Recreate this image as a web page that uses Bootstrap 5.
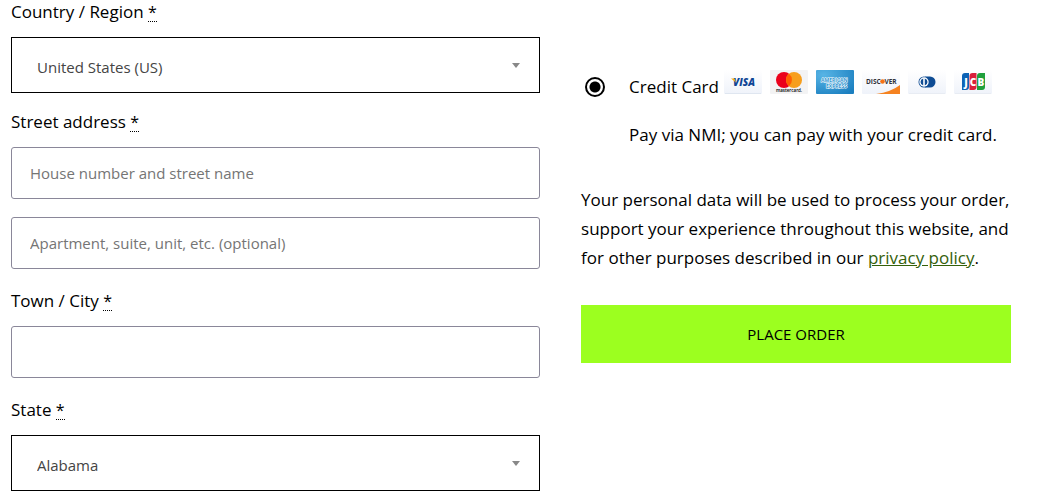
<!DOCTYPE html>
<html lang="en">
<head>
<meta charset="utf-8">
<meta name="viewport" content="width=device-width, initial-scale=1">
<title>Checkout</title>
<link href="https://cdn.jsdelivr.net/npm/bootstrap@5.3.0/dist/css/bootstrap.min.css" rel="stylesheet">
<style>
  body { font-family: "Open Sans", sans-serif; font-size: 17px; line-height: 29px; color: #000; background: #fff; }
  .checkout { display: grid; grid-template-columns: 1fr; column-gap: 41px; padding: 0 32px 12px 11px; }
  @media (min-width: 768px) { .checkout { grid-template-columns: 16fr 13fr; } }
  .field-label { display: block; line-height: 24px; margin-bottom: 13px; }
  .field-label abbr { cursor: help; font-size: 16px; text-decoration: none; border-bottom: 1px dotted #000; display: inline-block; line-height: 18px; }
  .form-control { height: 52px; padding: 0 18px; border: 1px solid #8a8799; border-radius: 3px; font-size: 15px; color: #000; }
  .form-control::placeholder { color: #757575; }
  .form-select {
    height: 56px; padding: 4px 40px 0 25px; border: 1px solid #000; border-radius: 0; font-size: 15px; color: #444;
    background-image: url("data:image/svg+xml,%3Csvg xmlns='http://www.w3.org/2000/svg' viewBox='0 0 8 5'%3E%3Cpath d='M0 0h8L4 5z' fill='%23888'/%3E%3C/svg%3E");
    background-size: 8px 5px; background-position: right 19px center;
  }
  .select-field { margin-bottom: 17px; }
  .text-field { margin-bottom: 20px; }
  .address-lines { display: grid; row-gap: 18px; }
  .payment { padding-top: 70px; }
  .method { display: grid; grid-template-columns: 48px 1fr; align-items: center; row-gap: 17px; margin-bottom: 36px; }
  .method .form-check-input { width: 20px; height: 20px; margin: 0 0 0 4px; border: 2px solid #000; background: #fff; }
  .method .form-check-input:checked { background: radial-gradient(circle, #000 5px, #fff 6px); }
  .method-note { grid-column: 2; }
  .cards { gap: 8px; margin-left: 5px; margin-bottom: 9px; }
  .cards svg { width: 38px; height: 24px; display: block; }
  .privacy { margin-bottom: 33px; }
  .privacy a { color: #34600a; }
  .btn-order { height: 58px; border: 0; border-radius: 0; background: #9cff1f; color: #000; font-size: 15px; }
  .btn-order:hover { background: #8ae61a; color: #000; }
</style>
</head>
<body>
<form class="checkout">
  <section>
    <div class="select-field">
      <label class="field-label" for="country">Country / Region <abbr title="required">*</abbr></label>
      <select class="form-select" id="country"><option>United States (US)</option></select>
    </div>
    <div class="text-field">
      <label class="field-label" for="street">Street address <abbr title="required">*</abbr></label>
      <div class="address-lines">
        <input class="form-control" id="street" type="text" placeholder="House number and street name">
        <input class="form-control" type="text" aria-label="Apartment, suite, unit" placeholder="Apartment, suite, unit, etc. (optional)">
      </div>
    </div>
    <div class="text-field">
      <label class="field-label" for="city">Town / City <abbr title="required">*</abbr></label>
      <input class="form-control" id="city" type="text">
    </div>
    <div>
      <label class="field-label" for="state">State <abbr title="required">*</abbr></label>
      <select class="form-select" id="state"><option>Alabama</option></select>
    </div>
  </section>

  <section class="payment">
    <div class="method">
      <input class="form-check-input" type="radio" name="method" id="credit" checked>
      <label class="d-flex align-items-center" for="credit">Credit Card
        <span class="cards d-flex">
          <svg viewBox="0 0 38 24" role="img" aria-label="Visa">
            <defs><linearGradient id="paper" x2="0" y2="1"><stop stop-color="#fff"/><stop offset="1" stop-color="#eff3fa"/></linearGradient></defs>
            <rect width="38" height="24" rx="1" fill="url(#paper)"/><path d="M1 23.5h36" stroke="#dfe6f0"/>
            <text x="20" y="16" text-anchor="middle" font-family="Open Sans, sans-serif" font-size="10" font-weight="800" font-style="italic" fill="#0e4595">VISA</text>
            <path d="M7 8.500h3.500l1.500 4z" fill="#f2ae14"/>
          </svg>
          <svg viewBox="0 0 38 24" role="img" aria-label="Mastercard">
            <rect width="38" height="24" rx="1" fill="#f3f3f4"/>
            <circle cx="14" cy="10" r="8" fill="#eb001b"/><circle cx="24" cy="10" r="8" fill="#f79e1b"/>
            <path d="M19 3.800a8 8 0 0 1 0 12.400a8 8 0 0 1 0-12.400" fill="#ff5f00"/>
            <text x="19" y="22" text-anchor="middle" font-family="Open Sans, sans-serif" font-size="4.500" font-weight="600">mastercard.</text>
          </svg>
          <svg viewBox="0 0 38 24" role="img" aria-label="American Express">
            <defs><radialGradient id="amex" cx=".2" cy=".2" r="1"><stop stop-color="#57b4e5"/><stop offset="1" stop-color="#1b7fc0"/></radialGradient></defs>
            <rect width="38" height="24" rx="1" fill="url(#amex)"/>
            <g font-family="Open Sans, sans-serif" font-size="5" font-weight="700" fill="#2f95d0" stroke="#fff" stroke-width="1" paint-order="stroke"><text x="5" y="12">AMERICAN</text><text x="10" y="18">EXPRESS</text></g>
          </svg>
          <svg viewBox="0 0 38 24" role="img" aria-label="Discover">
            <rect width="38" height="24" rx="1" fill="url(#paper)"/><path d="M38 15v9H14Q29 22 38 15" fill="#f58220"/>
            <g font-family="Open Sans, sans-serif" font-size="6.500" font-weight="700" fill="#30323a"><text x="4" y="14">DISC</text><text x="22.500" y="14">VER</text></g>
            <circle cx="20.500" cy="11.500" r="2.300" fill="#f47216"/>
          </svg>
          <svg viewBox="0 0 38 24" role="img" aria-label="Diners Club">
            <rect width="38" height="24" rx="1" fill="url(#paper)"/><path d="M1 23.500h36" stroke="#e8ecf3"/>
            <path d="M17 6.500h5a5.500 5.500 0 0 1 0 11h-5z" fill="#0f4c94"/><circle cx="16" cy="12" r="5.500" fill="#0f4c94"/>
            <circle cx="16" cy="12" r="4.700" fill="#fff"/><path d="M15.200 8.600a3.500 3.500 0 0 0 0 6.800zM16.800 8.600a3.500 3.500 0 0 1 0 6.800z" fill="#0f4c94"/>
          </svg>
          <svg viewBox="0 0 38 24" role="img" aria-label="JCB">
            <rect width="38" height="24" rx="1" fill="url(#paper)"/><path d="M1 23.500h36" stroke="#e8ecf3"/>
            <path d="M8 6q0-3 3-3h4v14q0 3-3 3H8z" fill="#0d63b5"/><path d="M15.500 6q0-3 3-3h4v14q0 3-3 3h-4z" fill="#d9203b"/><path d="M23 6q0-3 3-3h5v14q0 3-3 3h-5z" fill="#1fa03c"/>
            <g font-family="Open Sans, sans-serif" font-size="10" font-weight="800" fill="#fff" text-anchor="middle"><text x="12" y="15.500">J</text><text x="19" y="15.500">C</text><text x="26.800" y="15.500">B</text></g>
          </svg>
        </span>
      </label>
      <div class="method-note">Pay via NMI; you can pay with your credit card.</div>
    </div>
    <p class="privacy">Your personal data will be used to process your order, support your experience throughout this website, and for other purposes described in our <a href="#">privacy policy</a>.</p>
    <button class="btn btn-order w-100" type="submit">PLACE ORDER</button>
  </section>
</form>
<script src="https://cdn.jsdelivr.net/npm/bootstrap@5.3.0/dist/js/bootstrap.bundle.min.js"></script>
</body>
</html>
